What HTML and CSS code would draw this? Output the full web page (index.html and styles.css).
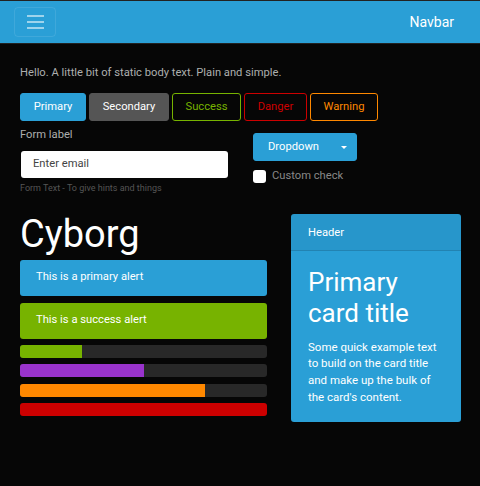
FILE: index.html
```html
<!DOCTYPE html>
<html>
<head>
<meta charset="utf-8">
<link rel="stylesheet" href="styles.css">
</head>
<body>
<nav class="navbar">
  <button class="toggler" aria-label="menu">
    <span class="bar"></span><span class="bar"></span><span class="bar"></span>
  </button>
  <span class="brand">Navbar</span>
</nav>
<main class="container">
  <p class="lead-text">Hello. A little bit of static body text. Plain and simple.</p>
  <div class="btn-row">
    <button class="btn btn-primary">Primary</button>
    <button class="btn btn-secondary">Secondary</button>
    <button class="btn btn-outline-success">Success</button>
    <button class="btn btn-outline-danger">Danger</button>
    <button class="btn btn-outline-warning">Warning</button>
  </div>
  <div class="form-row">
    <div class="form-group">
      <label class="form-label">Form label</label>
      <div class="form-control">Enter email</div>
      <small class="form-text">Form Text - To give hints and things</small>
    </div>
    <div class="side-controls">
      <button class="btn btn-primary dropdown">Dropdown <span class="caret"></span></button>
      <label class="check"><span class="check-box"></span>Custom check</label>
    </div>
  </div>
  <div class="grid">
    <div class="left">
      <h1 class="title">Cyborg</h1>
      <div class="alert alert-primary">This is a primary alert</div>
      <div class="alert alert-success">This is a success alert</div>
      <div class="progress"><div class="progress-bar pb-success" style="width:25%"></div></div>
      <div class="progress"><div class="progress-bar pb-info" style="width:50%"></div></div>
      <div class="progress"><div class="progress-bar pb-warning" style="width:75%"></div></div>
      <div class="progress"><div class="progress-bar pb-danger" style="width:100%"></div></div>
    </div>
    <div class="card">
      <div class="card-header">Header</div>
      <div class="card-body">
        <h4 class="card-title">Primary card title</h4>
        <p class="card-text">Some quick example text to build on the card title and make up the bulk of the card's content.</p>
      </div>
    </div>
  </div>
</main>
</body>
</html>
```
FILE: styles.css
```css
* { box-sizing: border-box; }
html, body { margin: 0; padding: 0; }
body {
  background: #060606;
  color: #adafae;
  font-family: Roboto, "Noto Sans", sans-serif;
  font-size: 11.2px;
  line-height: 1.5;
  width: 480px;
  height: 486px;
  overflow: hidden;
}
.navbar {
  height: 44px;
  background: #2a9fd6;
  border-top: 1px solid #222;
  border-bottom: 1px solid #222;
  display: flex;
  align-items: center;
  justify-content: space-between;
  padding: 0 26px 0 14px;
}
.toggler {
  width: 42px;
  height: 30px;
  border: 1px solid rgba(255,255,255,0.1);
  border-radius: 4px;
  background: transparent;
  display: flex;
  flex-direction: column;
  align-items: center;
  justify-content: center;
  gap: 4px;
  padding: 0;
}
.bar {
  display: block;
  width: 17px;
  height: 2px;
  background: rgba(255,255,255,0.55);
}
.brand {
  color: #fff;
  font-size: 14px;
}
.container {
  padding: 0 20px;
}
.lead-text {
  margin: 20px 0 12px;
  line-height: 17px;
}
.btn-row {
  display: flex;
  gap: 3px;
}
.btn {
  font-family: inherit;
  font-size: 11.2px;
  height: 28px;
  padding: 0 12px;
  border-radius: 3px;
  border: 1px solid transparent;
  background: transparent;
  color: #fff;
  line-height: 1;
}
.btn-primary { background: #2a9fd6; border-color: #2a9fd6; }
.btn-secondary { background: #555; border-color: #555; }
.btn-outline-success { color: #77b300; border-color: #77b300; }
.btn-outline-danger { color: #c00; border-color: #c00; }
.btn-outline-warning { color: #f80; border-color: #f80; }
.btn-row .btn-primary { width: 66px; }
.btn-row .btn-secondary { width: 80px; }
.btn-row .btn-outline-success { width: 69px; }
.btn-row .btn-outline-danger { width: 63px; }
.btn-row .btn-outline-warning { width: 68px; }
.form-row {
  display: flex;
  gap: 25px;
  margin-top: 5px;
}
.form-group {
  width: 208px;
  display: flex;
  flex-direction: column;
}
.form-label {
  line-height: 17px;
  color: #adafae;
}
.form-control {
  margin: 8px 0 0 1px;
  height: 27px;
  background: #fff;
  border-radius: 3px;
  color: #444;
  padding: 0 12px;
  display: flex;
  align-items: center;
}
.form-text {
  font-size: 9px;
  color: #555;
  margin-top: 4px;
}
.side-controls {
  display: flex;
  flex-direction: column;
  align-items: flex-start;
  padding-top: 7px;
}
.dropdown {
  width: 104px;
  height: 28px;
  display: flex;
  align-items: center;
  justify-content: space-between;
  padding: 0 9px 0 14px;
}
.caret {
  width: 0; height: 0;
  border-left: 3px solid transparent;
  border-right: 3px solid transparent;
  border-top: 3px solid #fff;
}
.check {
  display: flex;
  align-items: center;
  gap: 6px;
  margin-top: 7px;
  color: #888;
}
.check-box {
  width: 13px; height: 13px;
  background: #fff;
  border-radius: 3px;
}
.grid {
  display: grid;
  grid-template-columns: 247px 170px;
  gap: 24px;
  margin-top: 18px;
}
.title {
  margin: 0 0 6px;
  font-size: 38px;
  font-weight: 400;
  color: #fff;
  line-height: 40px;
}
.alert {
  height: 36px;
  border-radius: 3px;
  color: #fff;
  padding: 0 16px;
  display: flex;
  align-items: center;
  margin-bottom: 7px;
}
.alert-primary { background: #2a9fd6; }
.alert-success { background: #77b300; margin-bottom: 6px; }
.progress {
  height: 13px;
  background: #282828;
  border-radius: 3px;
  overflow: hidden;
  margin-bottom: 6.5px;
}
.progress-bar { height: 100%; }
.pb-success { background: #77b300; }
.pb-info { background: #93c; }
.pb-warning { background: #f80; }
.pb-danger { background: #c00; }
.card {
  background: #2a9fd6;
  border-radius: 3px;
  height: 208px;
  color: #fff;
}
.card-header {
  height: 37px;
  padding: 3px 17px 0;
  display: flex;
  align-items: center;
  background: rgba(0,0,0,0.05);
  border-bottom: 1px solid rgba(0,0,0,0.12);
}
.card-body {
  padding: 16px 17px;
}
.card-title {
  margin: 0 0 10px;
  font-size: 26px;
  font-weight: 400;
  line-height: 31px;
}
.card-text {
  margin: 0;
  font-size: 11.5px;
  line-height: 16.7px;
}
```
